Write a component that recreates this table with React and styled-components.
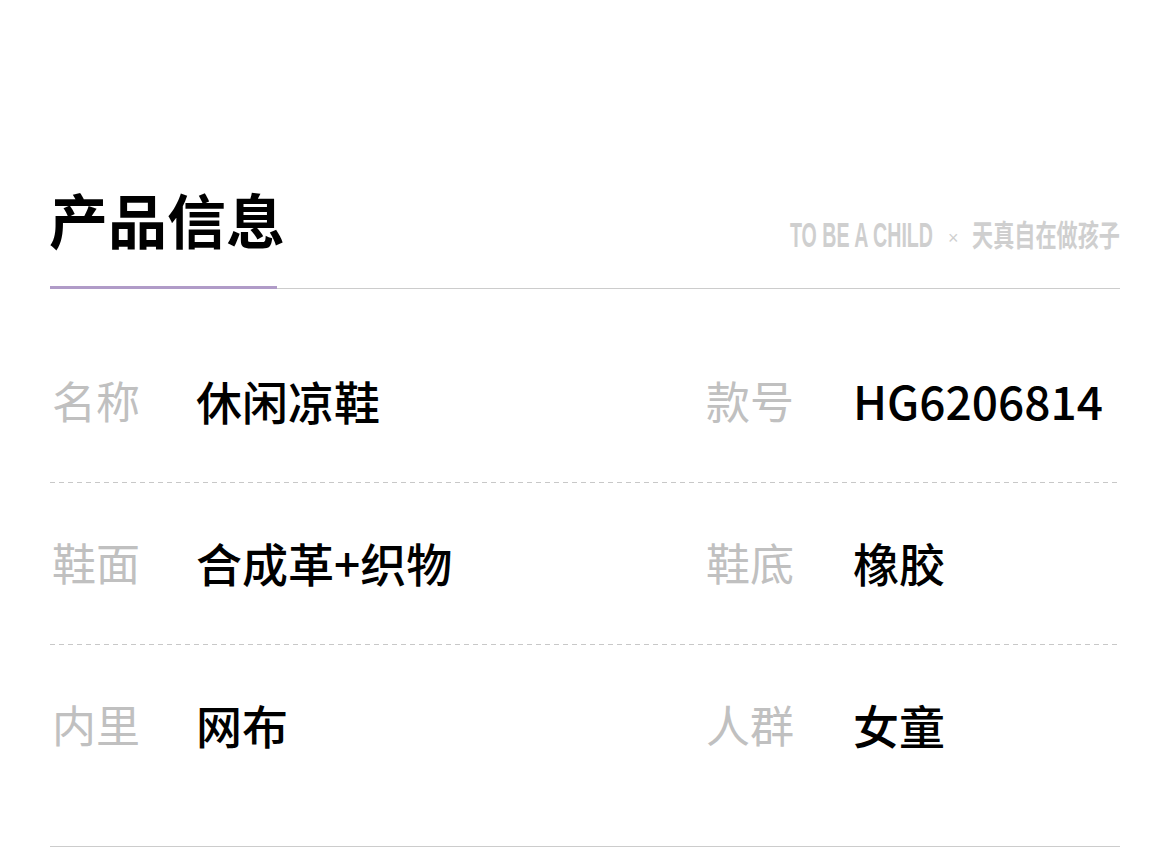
import React from 'react';
import styled, { createGlobalStyle } from 'styled-components';

const GlobalStyle = createGlobalStyle`
    body {
        margin: 0;
        background: #fff;
        font-family: "Noto Sans CJK SC", "Noto Sans", sans-serif;
    }
`;

const Page = styled.div`
    width: 1070px;
    padding: 188px 50px 0;
`;

const Header = styled.div`
    display: flex;
    justify-content: space-between;
    align-items: flex-end;
    padding-bottom: 38px;
    border-bottom: 1px solid #cccccc;
    position: relative;
`;

const Title = styled.h1`
    margin: 0;
    font-size: 59px;
    line-height: 62px;
    font-weight: 700;
    color: #000;
    margin-left: -1px;
    &::after {
        content: "";
        position: absolute;
        left: 0;
        bottom: -1px;
        width: 227px;
        height: 3px;
        background: #b09bc8;
    }
`;

const Slogan = styled.svg`
    display: block;
    margin-bottom: -4px;
    overflow: visible;
    fill: #cfcfcf;
`;

const List = styled.div`
    padding: 32px 0 39px;
    border-bottom: 1px solid #cccccc;
`;

const Row = styled.div`
    display: grid;
    grid-template-columns: 146px 508px 149px 1fr;
    align-items: center;
    height: 162px;
    box-sizing: border-box;
    padding-bottom: 5px;
    background: ${p => p.$last ? 'none' : 'repeating-linear-gradient(to right, #c8c8c8 0 5px, transparent 5px 9px) left bottom / 100% 1px no-repeat'};
`;

const Label = styled.span`
    font-size: 44px;
    font-weight: 400;
    color: #c0c0c0;
    padding-left: 2px;
`;

const Value = styled.span`
    font-size: 46px;
    font-weight: 500;
    color: #000;
`;

const rows = [
    ['名称', '休闲凉鞋', '款号', 'HG6206814'],
    ['鞋面', '合成革+织物', '鞋底', '橡胶'],
    ['内里', '网布', '人群', '女童'],
];

export default function App() {
    return (
        <Page>
            <GlobalStyle />
            <Header>
                <Title>产品信息</Title>
                <Slogan width="330" height="34" viewBox="0 0 330 34">
                    <text x="0" y="27" fontFamily="'Liberation Sans', sans-serif" fontWeight="700" fontSize="35" textLength="143" lengthAdjust="spacingAndGlyphs">TO BE A CHILD</text>
                    <text x="158" y="24" fontFamily="'Liberation Sans', sans-serif" fontSize="18">×</text>
                    <text x="182" y="26" fontFamily="'Noto Sans CJK SC', sans-serif" fontWeight="700" fontSize="30" textLength="148" lengthAdjust="spacingAndGlyphs">天真自在做孩子</text>
                </Slogan>
            </Header>
            <List>
                {rows.map((r, i) => (
                    <Row key={i} $last={i === rows.length - 1}>
                        <Label>{r[0]}</Label>
                        <Value>{r[1]}</Value>
                        <Label>{r[2]}</Label>
                        <Value>{r[3]}</Value>
                    </Row>
                ))}
            </List>
        </Page>
    );
}
